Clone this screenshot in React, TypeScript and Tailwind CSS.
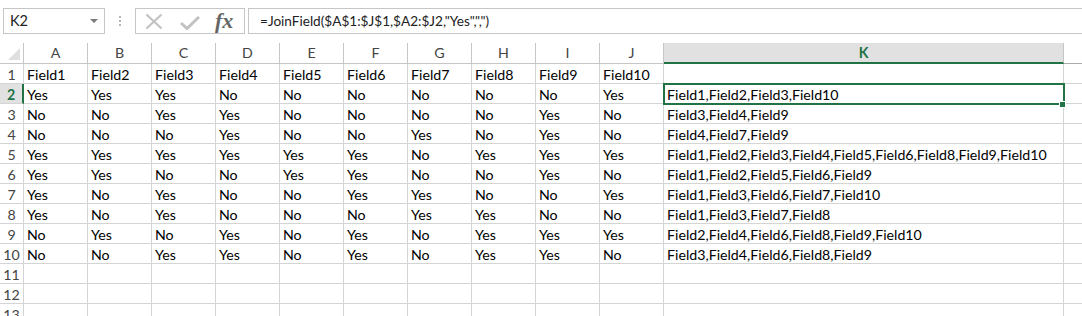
// Excel-like sheet: JoinField formula result in column K
const FONT = "font-['Lato','Liberation_Sans',sans-serif]";

const COLS = ["A", "B", "C", "D", "E", "F", "G", "H", "I", "J"];

// Y = Yes, N = No (rows 2..10)
const DATA = [
  "YYYNNNNNNY",
  "NNYYNNNNYN",
  "NNNYNNYNYN",
  "YYYYYYNYYY",
  "YYNNYYNNYN",
  "YNYNNYYNNY",
  "YNYNNNYYNN",
  "NYNYNYNYYY",
  "NNYYNYNYYN",
];

function joinField(row: string) {
  return row
    .split("")
    .map((v, i) => (v === "Y" ? `Field${i + 1}` : null))
    .filter(Boolean)
    .join(",");
}

function FormulaBar() {
  return (
    <div className="h-[43px] bg-white flex items-start pt-[8px] pl-[3px]">
      {/* Name box */}
      <div className="w-[102px] h-[26px] border border-[#c6c6c6] flex items-center justify-between pl-[6px] pr-[6px]">
        <span className="text-[14.5px] leading-[18px] text-[#222]">K2</span>
        <svg width="8" height="5" viewBox="0 0 8 5">
          <path d="M0 0 H8 L4 4 Z" fill="#7a7a7a" />
        </svg>
      </div>
      {/* grip dots */}
      <div className="w-[30px] h-[26px] flex flex-col items-center justify-center gap-[2px]">
        <span className="w-[2px] h-[2px] bg-[#b5b5b5]" />
        <span className="w-[2px] h-[2px] bg-[#b5b5b5]" />
        <span className="w-[2px] h-[2px] bg-[#b5b5b5]" />
      </div>
      {/* cancel / enter / fx */}
      <div className="w-[110px] h-[26px] border border-[#c6c6c6] flex items-center pl-[9px]">
        <svg width="18" height="17" viewBox="0 0 18 17">
          <path d="M1.5 1.5 L16.5 15.5 M16.5 1.5 L1.5 15.5" stroke="#c2c2c2" strokeWidth="2.2" />
        </svg>
        <svg className="ml-[17px] mt-[3px]" width="20" height="14" viewBox="0 0 20 14">
          <path d="M1 7 L7 12.5 L19 1" stroke="#c2c2c2" strokeWidth="3" fill="none" />
        </svg>
        <span className="ml-[15px] font-['Liberation_Serif',serif] italic font-bold text-[22px] leading-[24px] text-[#666]">
          fx
        </span>
      </div>
      {/* formula input */}
      <div className="ml-[3px] flex-1 h-[26px] border-y border-l border-[#c6c6c6] flex items-center pl-[11px]">
        <span className="text-[13.6px] leading-[18px] text-[#222] whitespace-pre">
          =JoinField($A$1:$J$1,$A2:$J2,"Yes",",")
        </span>
      </div>
    </div>
  );
}

function HeaderRow() {
  return (
    <>
      <div className="h-[21px] border-r border-b border-[#c6c6c6] flex items-end justify-end pr-[3px] pb-[3px]">
        <svg width="12" height="12" viewBox="0 0 12 12">
          <path d="M12 0 V12 H0 Z" fill="#dfdfdf" />
        </svg>
      </div>
      {COLS.map((c) => (
        <div
          key={c}
          className="h-[21px] border-r border-b border-[#c6c6c6] flex items-center justify-center text-[14.2px] leading-[18px] text-[#444]"
        >
          {c}
        </div>
      ))}
      <div className="h-[21px] border-r border-[#c6c6c6] border-b-2 border-b-[#217346] bg-[#e1e1e1] flex items-center justify-center text-[14.2px] leading-[18px] font-bold text-[#217346]">
        K
      </div>
      <div className="h-[21px] border-b border-[#ababab]" />
    </>
  );
}

function SheetRow({ n, cells, k }: { n: number; cells: string[]; k: string }) {
  const active = n === 2;
  const cell =
    "h-[20px] border-r border-b border-[#d4d4d4] flex items-center pl-[3px] pt-[3px] text-[14.2px] leading-[16px] text-black whitespace-nowrap";
  return (
    <>
      <div
        className={
          active
            ? "h-[20px] border-r-2 border-r-[#217346] border-b border-b-[#d4d4d4] bg-[#e1e1e1] flex items-center justify-center pt-[3px] text-[14.2px] leading-[16px] font-bold text-[#217346]"
            : "h-[20px] border-r border-b border-[#d4d4d4] flex items-center justify-center pt-[3px] text-[14.2px] leading-[16px] text-[#444]"
        }
      >
        {n}
      </div>
      {cells.map((v, i) => (
        <div key={i} className={cell}>
          {v}
        </div>
      ))}
      <div className={cell}>{k}</div>
      <div className="h-[20px] border-b border-[#d4d4d4]" />
    </>
  );
}

export default function App() {
  const rows: { n: number; cells: string[]; k: string }[] = [
    { n: 1, cells: COLS.map((_, i) => `Field${i + 1}`), k: "" },
    ...DATA.map((r, i) => ({
      n: i + 2,
      cells: r.split("").map((v) => (v === "Y" ? "Yes" : "No")),
      k: joinField(r),
    })),
    { n: 11, cells: COLS.map(() => ""), k: "" },
    { n: 12, cells: COLS.map(() => ""), k: "" },
    { n: 13, cells: COLS.map(() => ""), k: "" },
  ];

  return (
    <div className={`${FONT} w-[1082px] h-[316px] overflow-hidden bg-white`}>
      <FormulaBar />
      <div className="relative">
        <div className="grid grid-cols-[24px_repeat(10,64px)_400px_1fr]">
          <HeaderRow />
          {rows.map((r) => (
            <SheetRow key={r.n} {...r} />
          ))}
        </div>
        {/* active cell selection K2 with fill handle */}
        <div className="absolute left-[663px] top-[40px] w-[402px] h-[22px] border-2 border-[#217346]" />
        <div className="absolute left-[1059px] top-[58px] w-[7px] h-[7px] bg-[#217346] border border-white" />
      </div>
    </div>
  );
}
